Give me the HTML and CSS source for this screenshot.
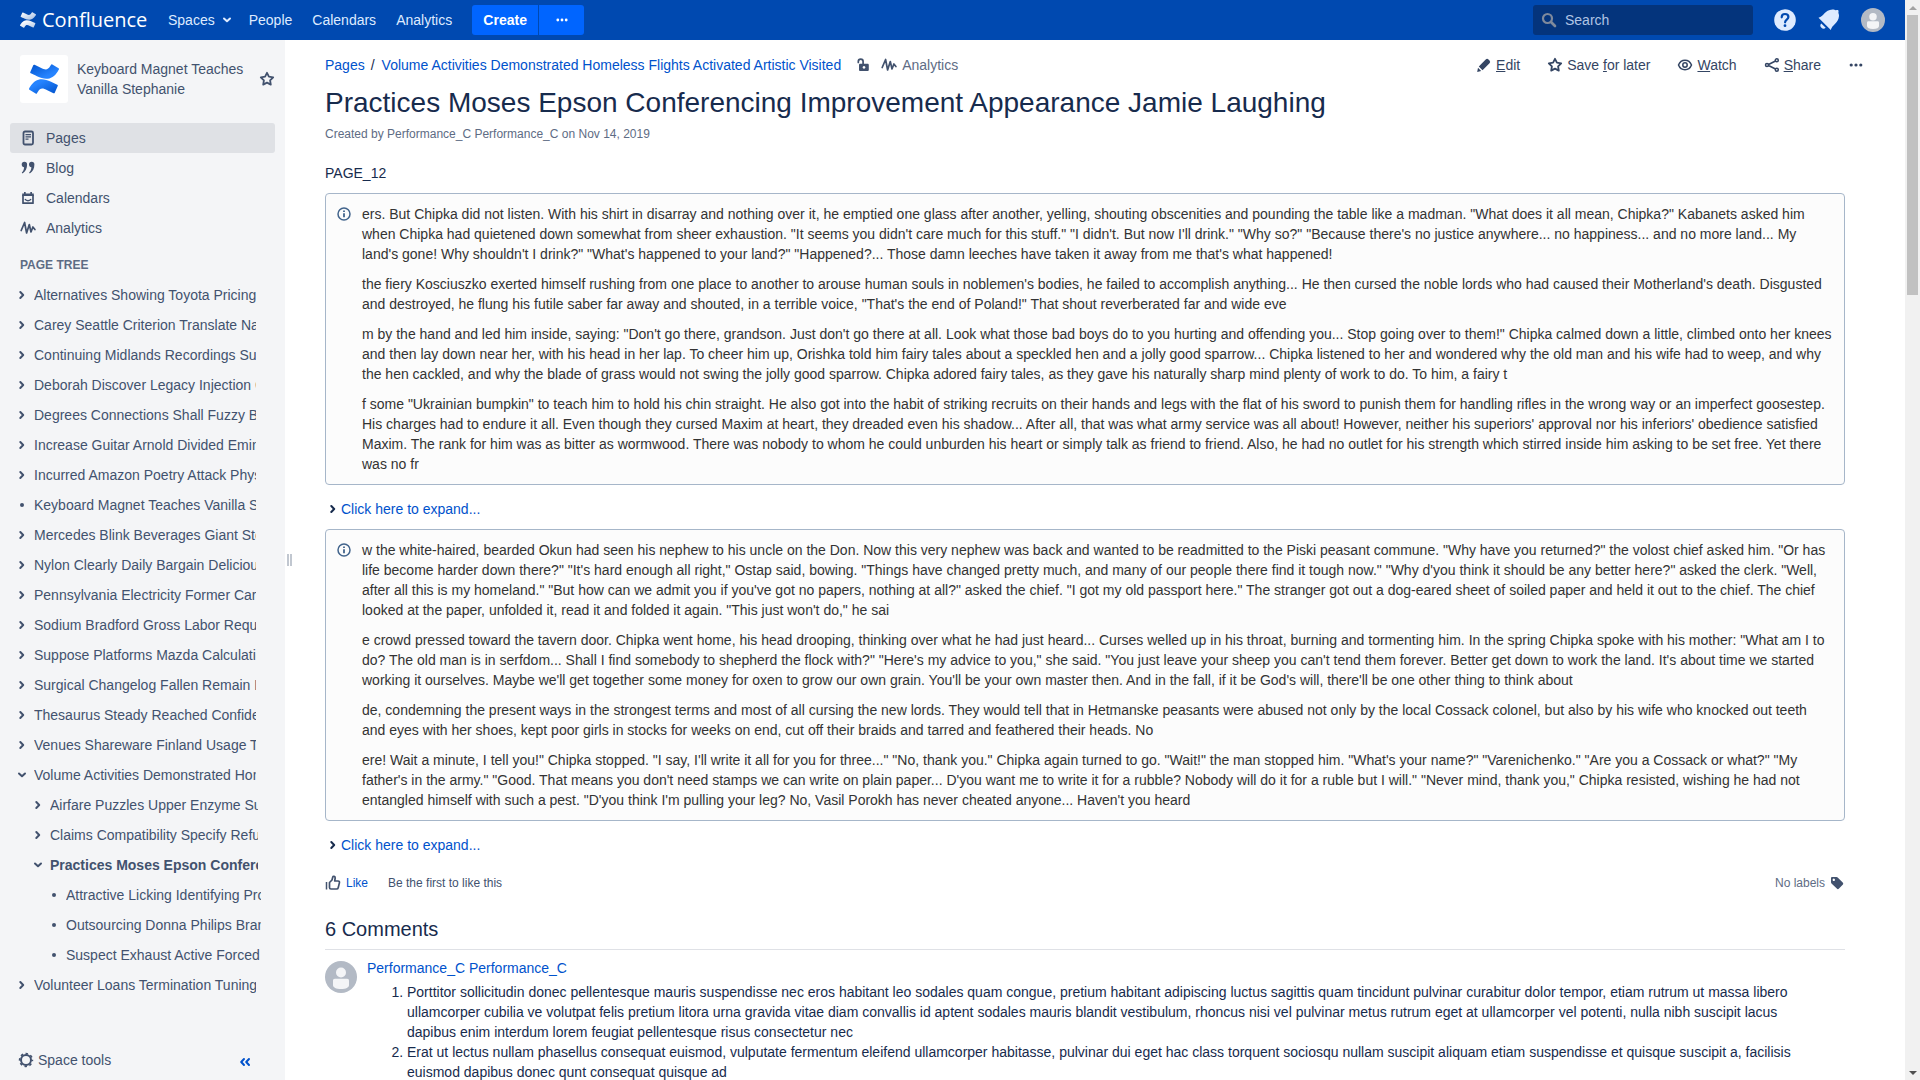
FILE: index.html
```html
<!DOCTYPE html>
<html lang="en">
<head>
<meta charset="utf-8">
<title>Practices Moses Epson Conferencing Improvement Appearance Jamie Laughing - Confluence</title>
<link rel="stylesheet" href="styles.css">
</head>
<body>
<svg class="defs" aria-hidden="true">
  <defs>
    <linearGradient id="mark-top" x1="1" y1="1" x2="0" y2="0"><stop offset="0.3" stop-color="#2684ff"/><stop offset="1" stop-color="#0052cc"/></linearGradient>
    <linearGradient id="mark-bottom" x1="0" y1="0" x2="1" y2="1"><stop offset="0.3" stop-color="#2684ff"/><stop offset="1" stop-color="#0052cc"/></linearGradient>
    <linearGradient id="logo-top" x1="1" y1="1" x2="0" y2="0"><stop offset="0.2" stop-color="#fff" stop-opacity="0.7"/><stop offset="1" stop-color="#fff"/></linearGradient>
    <linearGradient id="logo-bottom" x1="0" y1="0" x2="1" y2="1"><stop offset="0.2" stop-color="#fff"/><stop offset="1" stop-color="#fff" stop-opacity="0.7"/></linearGradient>
    <symbol id="i-right" viewBox="0 0 16 16"><path d="M6.300 5 9.200 8 6.300 11" fill="none" stroke="currentColor" stroke-width="2" stroke-linecap="round" stroke-linejoin="round"/></symbol>
    <symbol id="i-down" viewBox="0 0 16 16"><path d="M5 6.500 8 9.300l3-2.800" fill="none" stroke="currentColor" stroke-width="2" stroke-linecap="round" stroke-linejoin="round"/></symbol>
    <symbol id="i-dot" viewBox="0 0 16 16"><circle cx="8" cy="8" r="2" fill="currentColor"/></symbol>
    <symbol id="i-star" viewBox="0 0 16 16"><path d="M8 1.800 9.900 5.700l4.300.6-3.100 3 .7 4.300L8 11.600l-3.800 2 .7-4.300-3.100-3 4.300-.6z" fill="none" stroke="currentColor" stroke-width="1.800" stroke-linejoin="round"/></symbol>
    <symbol id="i-chart" viewBox="0 0 16 16"><path d="M1.200 10.500 4.600 2.500 6.600 13 9.300 4.500 11 12l1.900-5 2 2.500" fill="none" stroke="currentColor" stroke-width="1.700" stroke-linecap="round" stroke-linejoin="round"/></symbol>
    <symbol id="i-page" viewBox="0 0 16 16"><rect x="3.500" y="1.500" width="9.500" height="13" rx="1.500" fill="none" stroke="currentColor" stroke-width="1.800"/><path d="M5.500 4.700h5.500M5.500 6.900h5.500M5.500 9.100h3" stroke="currentColor" stroke-width="1.200"/></symbol>
    <symbol id="i-quote" viewBox="0 0 16 16"><path d="M1.700 4.500a2.700 2.700 0 0 1 5.400 0c0 4-1.500 7-4.600 9l-.7-1c1.500-1.200 2.200-3 2.300-5.200-1.400 0-2.400-1.200-2.400-2.800zM9 4.500a2.700 2.700 0 0 1 5.400 0c0 4-1.500 7-4.600 9l-.7-1c1.500-1.200 2.200-3 2.300-5.200C10 7.300 9 6.100 9 4.500z" fill="currentColor"/></symbol>
    <symbol id="i-cal" viewBox="0 0 16 16"><path d="M3 5v8.200h10V5" fill="none" stroke="currentColor" stroke-width="1.700" stroke-linejoin="round"/><path d="M2.200 3.500h11.600V6H2.200zM4 2h1.700v2H4zM10.300 2H12v2h-1.700z" fill="currentColor"/><path d="M5 9c1.200 2.200 4.800 2.200 6 0" fill="none" stroke="currentColor" stroke-width="1.500"/></symbol>
    <symbol id="i-info" viewBox="0 0 16 16"><circle cx="8" cy="8" r="6" fill="none" stroke="currentColor" stroke-width="1.500"/><path d="M7.100 7.200h1.800v4H7.100zM7.100 4.500h1.800v1.600H7.100z" fill="currentColor"/></symbol>
    <symbol id="i-more" viewBox="0 0 16 16"><circle cx="3.200" cy="8" r="1.600" fill="currentColor"/><circle cx="8" cy="8" r="1.600" fill="currentColor"/><circle cx="12.800" cy="8" r="1.600" fill="currentColor"/></symbol>
    <symbol id="i-user" viewBox="0 0 32 32"><circle cx="16" cy="16" r="16" fill="#b3bac5"/><circle cx="16" cy="11.500" r="5" fill="#f4f5f7"/><path d="M8 19.500c0-1 .8-1.800 1.800-1.800h12.400c1 0 1.800.8 1.800 1.800V24c0 2.500-3 4-8 4s-8-1.500-8-4z" fill="#f4f5f7"/></symbol>
    <path id="ribbon-bottom" d="M.87 18.257c-.248.382-.53.875-.763 1.245a.764.764 0 0 0 .255 1.040l4.965 3.054a.764.764 0 0 0 1.058-.26c.199-.332.454-.763.733-1.221 1.967-3.247 3.945-2.853 7.508-1.146l4.957 2.337a.764.764 0 0 0 1.028-.382l2.364-5.346a.764.764 0 0 0-.382-1 599.851 599.851 0 0 1-4.965-2.361C10.911 10.970 5.224 11.185.87 18.257z"/>
    <path id="ribbon-top" d="M23.131 5.743c.249-.405.531-.875.764-1.250a.764.764 0 0 0-.256-1.034L18.675.404a.764.764 0 0 0-1.058.26c-.195.335-.451.763-.734 1.225-1.966 3.246-3.945 2.850-7.508 1.146L4.437.694a.764.764 0 0 0-1.027.382L1.046 6.422a.764.764 0 0 0 .382 1c1.039.49 3.105 1.467 4.965 2.361 6.698 3.246 12.392 3.029 16.738-4.040z"/>
  </defs>
</svg>

<div class="app">
<header class="topbar">
  <a class="logo" href="#">
    <svg class="ic" viewBox="0 0 24 24"><use href="#ribbon-top" fill="url(#logo-top)"/><use href="#ribbon-bottom" fill="url(#logo-bottom)"/></svg>
    <span class="wordmark">Confluence</span>
  </a>
  <nav class="topnav">
    <a href="#">Spaces <svg class="ic"><use href="#i-down"/></svg></a>
    <a href="#">People</a>
    <a href="#">Calendars</a>
    <a href="#">Analytics</a>
  </nav>
  <div class="create">
    <button class="create-main" type="button">Create</button>
    <button class="create-more" type="button" aria-label="Create from template"><svg class="ic small"><use href="#i-more"/></svg></button>
  </div>
  <form class="search">
    <svg class="ic" viewBox="0 0 16 16"><circle cx="6.500" cy="6.500" r="4.500" fill="none" stroke="currentColor" stroke-width="2.200"/><path d="m10 10 4 4" stroke="currentColor" stroke-width="2.600" stroke-linecap="round"/></svg>
    <input type="text" placeholder="Search" aria-label="Search">
  </form>
  <div class="topicons">
    <a href="#" aria-label="Help"><svg class="ic24" viewBox="0 0 24 24"><circle cx="12" cy="12" r="10.800" fill="#deebff"/><path d="M8.700 9.300C8.700 7.300 10 6 12 6s3.400 1.300 3.400 3c0 2.600-3.300 2.700-3.300 5.300" fill="none" stroke="#0049b0" stroke-width="2.200" stroke-linecap="round"/><circle cx="12" cy="17.700" r="1.400" fill="#0049b0"/></svg></a>
    <a href="#" aria-label="Notifications"><svg class="ic24" viewBox="0 0 24 24"><path d="M1.500 9.800C7 8.500 7.500 2 15.500 1.600c1.500-.1 2.500.8 3.500.6.800-.2 1.700-.4 2.200.1.600.6.300 1.400.2 2.200-.1 1.100.8 2 .6 3.500C21.500 15.500 15 16.500 13.800 22z" fill="#deebff"/><path d="M4.300 15.600a2.600 2.600 0 0 0 4.400 4.100z" fill="#deebff"/></svg></a>
    <a href="#" aria-label="User menu"><svg class="ic24"><use href="#i-user"/></svg></a>
  </div>
</header>

<div class="layout">
<aside class="sidebar">
  <div class="space">
    <a class="space-logo" href="#" aria-label="Space home"><svg viewBox="0 0 24 24"><use href="#ribbon-top" fill="url(#mark-top)"/><use href="#ribbon-bottom" fill="url(#mark-bottom)"/></svg></a>
    <a class="space-name" href="#">Keyboard Magnet Teaches Vanilla Stephanie</a>
    <button class="plain" type="button" aria-label="Add to my spaces"><svg class="ic"><use href="#i-star"/></svg></button>
  </div>
  <nav class="sections">
    <a class="current" href="#"><svg class="ic"><use href="#i-page"/></svg>Pages</a>
    <a href="#"><svg class="ic"><use href="#i-quote"/></svg>Blog</a>
    <a href="#"><svg class="ic"><use href="#i-cal"/></svg>Calendars</a>
    <a href="#"><svg class="ic"><use href="#i-chart"/></svg>Analytics</a>
  </nav>
  <h2 class="tree-title">Page tree</h2>
  <ul class="tree">
    <li><svg class="ic"><use href="#i-right"/></svg><a href="#">Alternatives Showing Toyota Pricing</a></li>
    <li><svg class="ic"><use href="#i-right"/></svg><a href="#">Carey Seattle Criterion Translate Names</a></li>
    <li><svg class="ic"><use href="#i-right"/></svg><a href="#">Continuing Midlands Recordings Surface</a></li>
    <li><svg class="ic"><use href="#i-right"/></svg><a href="#">Deborah Discover Legacy Injection Care</a></li>
    <li><svg class="ic"><use href="#i-right"/></svg><a href="#">Degrees Connections Shall Fuzzy Birth</a></li>
    <li><svg class="ic"><use href="#i-right"/></svg><a href="#">Increase Guitar Arnold Divided Eminem</a></li>
    <li><svg class="ic"><use href="#i-right"/></svg><a href="#">Incurred Amazon Poetry Attack Physics</a></li>
    <li><svg class="ic"><use href="#i-dot"/></svg><a href="#">Keyboard Magnet Teaches Vanilla Stephanie</a></li>
    <li><svg class="ic"><use href="#i-right"/></svg><a href="#">Mercedes Blink Beverages Giant Storage</a></li>
    <li><svg class="ic"><use href="#i-right"/></svg><a href="#">Nylon Clearly Daily Bargain Delicious</a></li>
    <li><svg class="ic"><use href="#i-right"/></svg><a href="#">Pennsylvania Electricity Former Career</a></li>
    <li><svg class="ic"><use href="#i-right"/></svg><a href="#">Sodium Bradford Gross Labor Requests</a></li>
    <li><svg class="ic"><use href="#i-right"/></svg><a href="#">Suppose Platforms Mazda Calculations</a></li>
    <li><svg class="ic"><use href="#i-right"/></svg><a href="#">Surgical Changelog Fallen Remain Lists</a></li>
    <li><svg class="ic"><use href="#i-right"/></svg><a href="#">Thesaurus Steady Reached Confidence</a></li>
    <li><svg class="ic"><use href="#i-right"/></svg><a href="#">Venues Shareware Finland Usage Tools</a></li>
    <li><svg class="ic"><use href="#i-down"/></svg><a href="#">Volume Activities Demonstrated Homeless</a></li>
    <li class="level2"><svg class="ic"><use href="#i-right"/></svg><a href="#">Airfare Puzzles Upper Enzyme Surface</a></li>
    <li class="level2"><svg class="ic"><use href="#i-right"/></svg><a href="#">Claims Compatibility Specify Refund</a></li>
    <li class="level2 active"><svg class="ic"><use href="#i-down"/></svg><a href="#">Practices Moses Epson Conferencing</a></li>
    <li class="level3"><svg class="ic"><use href="#i-dot"/></svg><a href="#">Attractive Licking Identifying Products</a></li>
    <li class="level3"><svg class="ic"><use href="#i-dot"/></svg><a href="#">Outsourcing Donna Philips Brands</a></li>
    <li class="level3"><svg class="ic"><use href="#i-dot"/></svg><a href="#">Suspect Exhaust Active Forced</a></li>
    <li><svg class="ic"><use href="#i-right"/></svg><a href="#">Volunteer Loans Termination Tuning</a></li>
  </ul>
  <div class="side-foot">
    <button class="plain tools" type="button"><svg class="ic" viewBox="0 0 16 16"><circle cx="8" cy="8" r="5" fill="none" stroke="currentColor" stroke-width="2"/><circle cx="8" cy="8" r="6.400" fill="none" stroke="currentColor" stroke-width="1.600" stroke-dasharray="2.500 2.530" stroke-dashoffset="1.250"/></svg>Space tools</button>
    <button class="plain collapse" type="button" aria-label="Collapse sidebar"><svg class="ic" viewBox="0 0 16 16"><path d="M7 5 4.200 8 7 11M12 5 9.200 8l2.800 3" fill="none" stroke="currentColor" stroke-width="2" stroke-linecap="round" stroke-linejoin="round"/></svg></button>
  </div>
</aside>
<div class="splitter"><span class="grip"></span></div>

<main class="content">
  <div class="page-head">
    <nav class="crumbs">
      <a href="#">Pages</a><span class="sep">/</span><a href="#">Volume Activities Demonstrated Homeless Flights Activated Artistic Visited</a>
      <button class="plain lock" type="button" aria-label="Unrestricted"><svg class="ic" viewBox="0 0 16 16"><path d="M3.300 5.500V4.500a2.400 2.400 0 0 1 4.800 0V7" fill="none" stroke="currentColor" stroke-width="1.700" stroke-linecap="round"/><path fill-rule="evenodd" d="M5.300 6.700h7.200c.8 0 1.300.5 1.300 1.300v4.800c0 .8-.5 1.300-1.300 1.300H5.300c-.8 0-1.300-.5-1.300-1.300V8c0-.8.500-1.300 1.300-1.300z M9 9a1.400 1.400 0 1 0 .001 0z" fill="currentColor"/></svg></button>
      <a class="stat" href="#"><svg class="ic"><use href="#i-chart"/></svg>Analytics</a>
    </nav>
    <div class="actions">
      <a href="#"><svg class="ic" viewBox="0 0 16 16"><path d="m2.800 9.500 6.900-7a2 2 0 0 1 2.800 0l1 1a2 2 0 0 1 0 2.800l-7 6.900zM2 10.800 5.200 14l-4 .9z" fill="currentColor"/></svg><span><u>E</u>dit</span></a>
      <a href="#"><svg class="ic"><use href="#i-star"/></svg><span>Save <u>f</u>or later</span></a>
      <a href="#"><svg class="ic" viewBox="0 0 16 16"><path d="M1.500 8C2.700 5 5 3.300 8 3.300S13.300 5 14.500 8C13.300 11 11 12.700 8 12.700S2.700 11 1.500 8z" fill="none" stroke="currentColor" stroke-width="1.500"/><circle cx="8" cy="8" r="2.200" fill="none" stroke="currentColor" stroke-width="1.500"/></svg><span><u>W</u>atch</span></a>
      <a href="#"><svg class="ic" viewBox="0 0 16 16"><path d="M12.500 3.500 3.500 8l9 4.500" fill="none" stroke="currentColor" stroke-width="1.600"/><g fill="#fff" stroke="currentColor" stroke-width="1.500"><circle cx="3" cy="8" r="1.500"/><circle cx="12.800" cy="3.300" r="1.500"/><circle cx="12.800" cy="12.700" r="1.500"/></g></svg><span><u>S</u>hare</span></a>
      <button class="plain" type="button" aria-label="More actions"><svg class="ic"><use href="#i-more"/></svg></button>
    </div>
  </div>
  <h1>Practices Moses Epson Conferencing Improvement Appearance Jamie Laughing</h1>
  <p class="byline">Created by <a href="#">Performance_C Performance_C</a> on <a href="#">Nov 14, 2019</a></p>

  <p class="lead">PAGE_12</p>
  <section class="panel">
    <svg class="ic info"><use href="#i-info"/></svg>
    <div class="panel-body">
      <p>ers. But Chipka did not listen. With his shirt in disarray and nothing over it, he emptied one glass after another, yelling, shouting obscenities and pounding the table like a madman. "What does it all mean, Chipka?" Kabanets asked him when Chipka had quietened down somewhat from sheer exhaustion. "It seems you didn't care much for this stuff." "I didn't. But now I'll drink." "Why so?" "Because there's no justice anywhere... no happiness... and no more land... My land's gone! Why shouldn't I drink?" "What's happened to your land?" "Happened?... Those damn leeches have taken it away from me that's what happened!</p>
      <p>the fiery Kosciuszko exerted himself rushing from one place to another to arouse human souls in noblemen's bodies, he failed to accomplish anything... He then cursed the noble lords who had caused their Motherland's death. Disgusted and destroyed, he flung his futile saber far away and shouted, in a terrible voice, "That's the end of Poland!" That shout reverberated far and wide eve</p>
      <p>m by the hand and led him inside, saying: "Don't go there, grandson. Just don't go there at all. Look what those bad boys do to you hurting and offending you... Stop going over to them!" Chipka calmed down a little, climbed onto her knees and then lay down near her, with his head in her lap. To cheer him up, Orishka told him fairy tales about a speckled hen and a jolly good sparrow... Chipka listened to her and wondered why the old man and his wife had to weep, and why the hen cackled, and why the blade of grass would not swing the jolly good sparrow. Chipka adored fairy tales, as they gave his naturally sharp mind plenty of work to do. To him, a fairy t</p>
      <p>f some "Ukrainian bumpkin" to teach him to hold his chin straight. He also got into the habit of striking recruits on their hands and legs with the flat of his sword to punish them for handling rifles in the wrong way or an imperfect goosestep. His charges had to endure it all. Even though they cursed Maxim at heart, they dreaded even his shadow... After all, that was what army service was all about! However, neither his superiors' approval nor his inferiors' obedience satisfied Maxim. The rank for him was as bitter as wormwood. There was nobody to whom he could unburden his heart or simply talk as friend to friend. Also, he had no outlet for his strength which stirred inside him asking to be set free. Yet there was no fr</p>
    </div>
  </section>
  <button class="plain expand" type="button"><svg class="ic"><use href="#i-right"/></svg>Click here to expand...</button>
  <section class="panel">
    <svg class="ic info"><use href="#i-info"/></svg>
    <div class="panel-body">
      <p>w the white-haired, bearded Okun had seen his nephew to his uncle on the Don. Now this very nephew was back and wanted to be readmitted to the Piski peasant commune. "Why have you returned?" the volost chief asked him. "Or has life become harder down there?" "It's hard enough all right," Ostap said, bowing. "Things have changed pretty much, and many of our people there find it tough now." "Why d'you think it should be any better here?" asked the clerk. "Well, after all this is my homeland." "But how can we admit you if you've got no papers, nothing at all?" asked the chief. "I got my old passport here." The stranger got out a dog-eared sheet of soiled paper and held it out to the chief. The chief looked at the paper, unfolded it, read it and folded it again. "This just won't do," he sai</p>
      <p>e crowd pressed toward the tavern door. Chipka went home, his head drooping, thinking over what he had just heard... Curses welled up in his throat, burning and tormenting him. In the spring Chipka spoke with his mother: "What am I to do? The old man is in serfdom... Shall I find somebody to shepherd the flock with?" "Here's my advice to you," she said. "You just leave your sheep you can't tend them forever. Better get down to work the land. It's about time we started working it ourselves. Maybe we'll get together some money for oxen to grow our own grain. You'll be your own master then. And in the fall, if it be God's will, there'll be one other thing to think about</p>
      <p>de, condemning the present ways in the strongest terms and most of all cursing the new lords. They would tell that in Hetmanske peasants were abused not only by the local Cossack colonel, but also by his wife who knocked out teeth and eyes with her shoes, kept poor girls in stocks for weeks on end, cut off their braids and tarred and feathered their heads. No</p>
      <p>ere! Wait a minute, I tell you!" Chipka stopped. "I say, I'll write it all for you for three..." "No, thank you." Chipka again turned to go. "Wait!" the man stopped him. "What's your name?" "Varenichenko." "Are you a Cossack or what?" "My father's in the army." "Good. That means you don't need stamps we can write on plain paper... D'you want me to write it for a rubble? Nobody will do it for a ruble but I will." "Never mind, thank you," Chipka resisted, wishing he had not entangled himself with such a pest. "D'you think I'm pulling your leg? No, Vasil Porokh has never cheated anyone... Haven't you heard</p>
    </div>
  </section>
  <button class="plain expand" type="button"><svg class="ic"><use href="#i-right"/></svg>Click here to expand...</button>

  <div class="likes">
    <button class="plain like" type="button"><svg class="ic" viewBox="0 0 16 16"><path d="M1.500 7v7.500" stroke="#42526e" stroke-width="1.500"/><path d="M4.500 7.500 7 5 7.800 2c.3-1 2.400-.8 2.400.9L9.700 6h3.300c1.200 0 1.700.8 1.400 1.900l-1.200 4.800c-.2.900-.8 1.300-1.700 1.300H6c-.9 0-1.500-.6-1.500-1.500z" fill="none" stroke="#42526e" stroke-width="1.700" stroke-linejoin="round"/></svg>Like</button>
    <span class="like-note">Be the first to like this</span>
    <span class="labels">No labels <svg class="ic" viewBox="0 0 16 16"><path fill-rule="evenodd" d="M2 3.200C2 2.500 2.500 2 3.200 2h4.300c.5 0 .9.200 1.200.5l5 5c.7.700.7 1.500 0 2.200l-3.700 3.900c-.7.700-1.500.7-2.200 0L2.500 8.400C2.200 8.100 2 7.700 2 7.300zM4.800 3.600a1.200 1.200 0 1 0 .001 0z" fill="currentColor"/></svg></span>
  </div>

  <h2 class="comments-title">6 Comments</h2>
  <article class="comment">
    <svg class="avatar"><use href="#i-user"/></svg>
    <div class="comment-body">
      <a href="#">Performance_C Performance_C</a>
      <ol>
        <li>Porttitor sollicitudin donec pellentesque mauris suspendisse nec eros habitant leo sodales quam congue, pretium habitant adipiscing luctus sagittis quam tincidunt pulvinar curabitur dolor tempor, etiam rutrum ut massa libero ullamcorper cubilia ve volutpat felis pretium litora urna gravida vitae diam convallis id aptent sodales mauris blandit vestibulum, rhoncus nisi vel pulvinar metus rutrum eget at ullamcorper vel potenti, nulla nibh suscipit lacus dapibus enim interdum lorem feugiat pellentesque risus consectetur nec</li>
        <li>Erat ut lectus nullam phasellus consequat euismod, vulputate fermentum eleifend ullamcorper habitasse, pulvinar dui eget hac class torquent sociosqu nullam suscipit aliquam etiam suspendisse et quisque suscipit a, facilisis euismod dapibus donec qunt consequat quisque ad</li>
      </ol>
    </div>
  </article>
</main>
</div>
</div>

<div class="scrollbar" aria-hidden="true">
  <span class="arrow up"></span>
  <span class="track"><span class="thumb"></span></span>
  <span class="arrow down"></span>
</div>
</body>
</html>
```
FILE: styles.css
```css
* { box-sizing: border-box; }

body {
  margin: 0;
  display: flex;
  height: 100vh;
  overflow: hidden;
  background: #fff;
  color: #172b4d;
  font: 14px/20px "Liberation Sans", Arial, sans-serif;
}

a { color: #0052cc; text-decoration: none; }
button, input { font: inherit; }
.defs { position: absolute; width: 0; height: 0; }
.ic { width: 16px; height: 16px; flex: none; }
.ic24 { width: 24px; height: 24px; display: block; }
.plain { display: flex; align-items: center; padding: 0; border: 0; background: none; color: inherit; }

.app { flex: 1; min-width: 0; display: flex; flex-direction: column; }

/* Top bar */
.topbar {
  flex: none;
  display: flex;
  align-items: center;
  height: 40px;
  padding: 0 20px;
  background: #0049b0;
  color: #deebff;
}
.topbar a { color: #deebff; }
.logo { display: flex; align-items: center; gap: 6px; width: 138px; }
.topbar .wordmark { color: #fff; font: 20px/24px "Open Sans", sans-serif; }
.topnav { display: flex; gap: 20px; margin-left: 10px; }
.topnav a { display: flex; align-items: center; gap: 4px; }
.topnav .ic { margin-right: -6px; }
.create { display: flex; gap: 1px; margin-left: 20px; }
.create button { height: 30px; border: 0; background: #0065ff; color: #fff; }
.create .create-main { width: 66px; padding: 0; border-radius: 3px 0 0 3px; font-weight: 700; }
.create .create-more { display: grid; place-items: center; width: 45px; padding: 0; border-radius: 0 3px 3px 0; }
.small { width: 14px; height: 14px; }
.search {
  display: flex;
  align-items: center;
  gap: 8px;
  width: 220px;
  height: 30px;
  margin-left: auto;
  padding: 0 8px;
  border-radius: 3px;
  background: #04347c;
  color: #7f8a9c;
}
.search input { min-width: 0; flex: 1; padding: 0; border: 0; outline: 0; background: none; color: #deebff; }
.search input::placeholder { color: #b0c4e4; opacity: 1; }
.topicons { display: flex; gap: 20px; margin-left: 20px; }

/* Sidebar */
.layout { flex: 1; min-height: 0; display: flex; }
.sidebar {
  flex: none;
  display: flex;
  flex-direction: column;
  width: 285px;
  background: #f4f5f7;
  color: #42526e;
}
.sidebar a { color: #42526e; }
.space { display: flex; align-items: center; gap: 8px; padding: 15px 10px 0 20px; }
.space-logo { display: grid; place-items: center; width: 48px; height: 48px; margin-right: 1px; border-radius: 3px; background: #fff; }
.space-logo, .space button { flex: none; }
.space-logo svg { width: 30px; height: 30px; }
.space-name { flex: 1; }
.sections { padding: 20px 10px 0; }
.sections a { display: flex; align-items: center; gap: 10px; height: 30px; padding: 0 10px; border-radius: 3px; }
.sections .current { background: #dfe1e5; }
.tree-title { margin: 12px 20px 0; font-size: 12px; line-height: 20px; font-weight: 700; text-transform: uppercase; color: #5e6c84; }
.tree { margin: 5px 0 0; padding: 0 29px 0 14px; list-style: none; }
.tree li { display: flex; align-items: center; gap: 4px; height: 30px; }
.tree a { flex: 1; overflow: hidden; white-space: nowrap; }
.tree .level2 { padding-left: 16px; margin-right: -2px; }
.tree .level3 { padding-left: 32px; margin-right: -5px; }
.tree .active { font-weight: 700; }
.side-foot { display: flex; justify-content: space-between; margin-top: auto; padding: 0 32px 10px 18px; }
.tools { gap: 4px; }
.collapse { color: #0052cc; padding-top: 3px; }
.splitter { flex: none; display: flex; align-items: center; width: 10px; padding-left: 2px; }
.grip { width: 5px; height: 12px; border: solid #c1c7d0; border-width: 0 2px; }

/* Page */
.content { flex: 1; min-width: 0; overflow: hidden; padding: 15px 60px 0 30px; }
.page-head { display: flex; justify-content: space-between; margin-right: -19px; }
.crumbs { display: flex; }
.sep { margin: 0 7px 0 6px; }
.lock { margin-left: 14px; color: #42526e; }
.crumbs .stat { display: flex; align-items: center; gap: 5px; margin-left: 10px; color: #5e6c84; }
.stat .ic { color: #42526e; }
.actions { display: flex; gap: 27px; color: #344563; }
.actions a { display: flex; align-items: center; gap: 4px; color: #344563; }
h1 { margin: 10px 0 0; font-size: 28px; line-height: 36px; font-weight: 400; }
.byline { margin: 3px 0 0; font-size: 12px; line-height: 20px; color: #5e6c84; }
.byline a { color: #5e6c84; }
.lead { margin: 19px 0 0; }
.panel {
  display: flex;
  gap: 10px;
  margin-top: 10px;
  padding: 10px;
  border: 1px solid #a6b6c9;
  border-radius: 4px;
  background: #fcfcfc;
  color: #333;
}
.info { margin-top: 2px; color: #42648c; }
.panel p { margin: 0; }
.panel p + p { margin-top: 10px; }
.expand { margin-top: 14px; color: #0052cc; }
.expand .ic { color: #172b4d; }

.likes { display: flex; margin-top: 18px; font-size: 12px; color: #42526e; }
.like { gap: 5px; color: #0052cc; }
.like-note { margin-left: 20px; }
.labels { display: flex; align-items: center; gap: 4px; margin-left: auto; color: #5e6c84; }
.labels .ic { color: #42526e; }
.comments-title { margin: 22px 0 0; padding-bottom: 6px; border-bottom: 1px solid #dfe1e6; font-size: 20px; line-height: 28px; font-weight: 400; }
.comment { display: flex; gap: 10px; padding-top: 8px; }
.avatar { width: 32px; height: 32px; margin-top: 3px; flex: none; }
.comment ol { margin: 4px 40px 0 0; padding-left: 40px; }

/* Window scroll bar */
.scrollbar { flex: none; display: flex; flex-direction: column; width: 15px; background: #f1f1f1; }
.arrow { display: grid; place-items: center; height: 15px; }
.arrow::before { content: ""; border: solid transparent; border-width: 0 4px; }
.up::before { border-bottom: 4px solid #a3a3a3; }
.down::before { border-top: 4px solid #505050; }
.track { flex: 1; padding: 0 2px; }
.thumb { display: block; height: calc(100% * 4 / 15); background: #c1c1c1; }
```
